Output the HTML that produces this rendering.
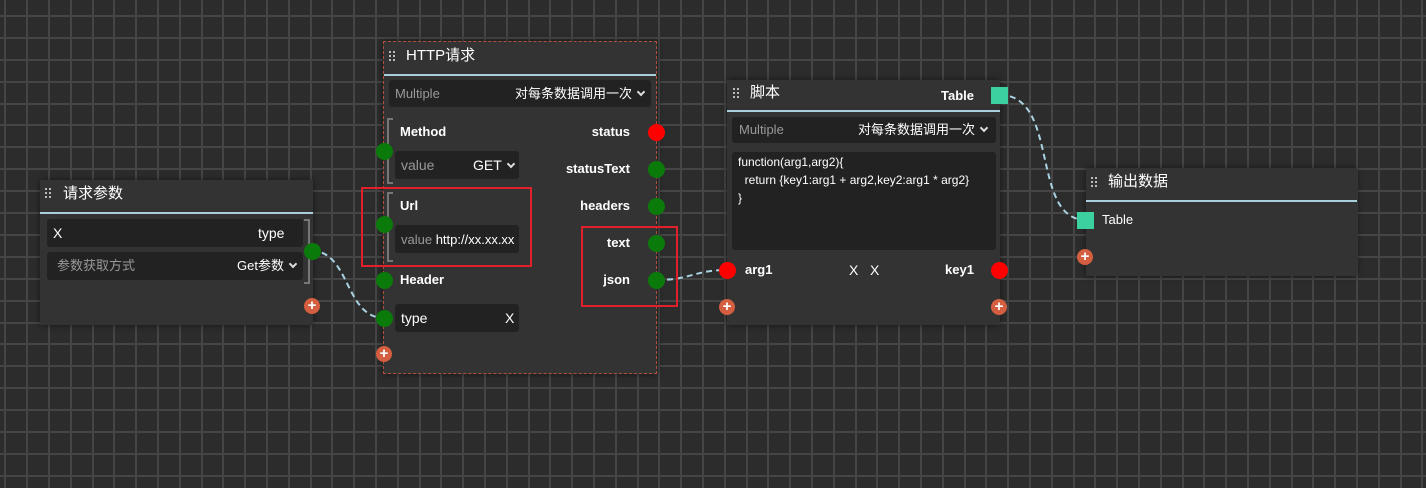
<!DOCTYPE html>
<html><head><meta charset="utf-8"><style>
*{margin:0;padding:0;box-sizing:border-box}
body{width:1426px;height:488px;overflow:hidden;position:relative;font-family:"Liberation Sans","Noto Sans CJK SC",sans-serif;font-size:13px;color:#fff;background-color:#2c2c2c}
.a{position:absolute}
.node{position:absolute;background:#333;box-shadow:0 0 6px rgba(0,0,0,.5)}
.sep{position:absolute;height:2px;background:#a9cfdd}
.title{position:absolute;font-size:15px;line-height:18px;color:#fff;white-space:nowrap}
.grip{position:absolute;width:6px;height:10px;background-image:radial-gradient(circle,#ddd 0.9px,transparent 1.1px);background-size:4px 4px;background-position:-1px -1px}
.box{position:absolute;background:#222;border-radius:3px}
.t{position:absolute;line-height:16px;white-space:nowrap}
.g{color:#999}
.b{font-weight:bold}
.dot{position:absolute;width:17px;height:17px;border-radius:50%;background:#0a7a0a}
.red{background:#f00}
.plus{position:absolute;width:16px;height:16px;border-radius:50%;background:#d45f40;color:#fff;font-size:15px;line-height:15px;text-align:center;font-weight:bold}
.sq{position:absolute;width:17px;height:17px;background:#3ccf9f}
.rr{position:absolute;border:2px solid #e0202a}
.chev{display:inline-block;width:6px;height:6px;border-right:2px solid #ddd;border-bottom:2px solid #ddd;transform:rotate(45deg);margin-left:6px;position:relative;top:-3px}
.brk{position:absolute;border:2px solid #777;border-right:none;width:6px}
.brkr{position:absolute;border:2px solid #777;border-left:none;width:6px}
#w{position:absolute;left:0;top:0;width:1426px;height:488px;z-index:2}
</style></head><body>

<svg class="a" style="left:0;top:0" width="1426" height="488">
<path stroke="#454545" stroke-width="2" shape-rendering="crispEdges" fill="none" d="
M5 0V488M27 0V488M49 0V488M71 0V488M93 0V488M114 0V488M136 0V488M158 0V488M180 0V488M202 0V488M223 0V488M245 0V488M267 0V488M289 0V488M311 0V488M332 0V488M354 0V488M376 0V488M398 0V488M420 0V488M441 0V488M463 0V488M485 0V488M507 0V488M529 0V488M550 0V488M572 0V488M594 0V488M616 0V488M638 0V488M659 0V488M681 0V488M703 0V488M725 0V488M747 0V488M768 0V488M790 0V488M812 0V488M834 0V488M856 0V488M877 0V488M899 0V488M921 0V488M943 0V488M965 0V488M986 0V488M1008 0V488M1030 0V488M1052 0V488M1074 0V488M1095 0V488M1117 0V488M1139 0V488M1161 0V488M1183 0V488M1204 0V488M1226 0V488M1248 0V488M1270 0V488M1292 0V488M1313 0V488M1335 0V488M1357 0V488M1379 0V488M1401 0V488M1422 0V488
M0 16H1426M0 38H1426M0 60H1426M0 82H1426M0 104H1426M0 125H1426M0 147H1426M0 169H1426M0 191H1426M0 213H1426M0 235H1426M0 257H1426M0 279H1426M0 301H1426M0 323H1426M0 344H1426M0 366H1426M0 388H1426M0 410H1426M0 432H1426M0 454H1426M0 476H1426"/>
</svg>

<svg class="a" style="left:0;top:0;z-index:1" width="1426" height="488">
<g fill="none" stroke="#a9d2e2" stroke-width="2" stroke-dasharray="6,4">
<path d="M312 251 C350 251 345 318 384 318"/>
<path d="M657 280 C690 280 695 270 727 270"/>
<path d="M1000 95 C1060 95 1030 220 1086 220"/>
</g></svg>

<div id="w">
<!-- Node 1 -->
<div class="node" style="left:40px;top:180px;width:273px;height:145px"></div>
<div class="grip" style="left:45px;top:188px"></div>
<div class="title" style="left:63px;top:185px">请求参数</div>
<div class="sep" style="left:40px;top:212px;width:273px"></div>
<div class="box" style="left:47px;top:219px;width:256px;height:28px"></div>
<div class="t" style="left:53px;top:225px;font-size:14px">X</div>
<div class="t" style="left:258px;top:225px;font-size:14px">type</div>
<div class="box" style="left:47px;top:252px;width:256px;height:28px"></div>
<div class="t g" style="left:57px;top:258px">参数获取方式</div>
<div class="t" style="left:237px;top:258px">Get参数<span class="chev"></span></div>
<div class="brkr" style="left:304px;top:219px;height:65px"></div>
<div class="plus" style="left:304px;top:298px">+</div>

<!-- Node 2 -->
<div class="node" style="left:383px;top:41px;width:274px;height:333px;border:1.5px dashed #b0503c"></div>
<div class="grip" style="left:389px;top:51px"></div>
<div class="title" style="left:406px;top:47px">HTTP请求</div>
<div class="sep" style="left:384px;top:74px;width:272px"></div>
<div class="box" style="left:389px;top:80px;width:262px;height:27px"></div>
<div class="t g" style="left:395px;top:86px">Multiple</div>
<div class="t" style="left:515px;top:86px">对每条数据调用一次<span class="chev"></span></div>
<div class="brk" style="left:387px;top:118px;height:66px"></div>
<div class="t b" style="left:400px;top:124px">Method</div>
<div class="box" style="left:395px;top:151px;width:124px;height:28px"></div>
<div class="t g" style="left:401px;top:157px;font-size:14px">value</div>
<div class="t" style="left:473px;top:157px;font-size:14px">GET<span class="chev"></span></div>
<div class="brk" style="left:387px;top:192px;height:70px"></div>
<div class="t b" style="left:400px;top:198px">Url</div>
<div class="box" style="left:395px;top:225px;width:124px;height:28px"></div>
<div class="t" style="left:401px;top:232px"><span class="g">value</span> http://xx.xx.xx</div>
<div class="t b" style="left:400px;top:272px">Header</div>
<div class="box" style="left:395px;top:304px;width:124px;height:28px"></div>
<div class="t" style="left:401px;top:310px;font-size:14px">type</div>
<div class="t" style="left:505px;top:310px;font-size:14px">X</div>
<div class="dot" style="left:376px;top:143px"></div>
<div class="dot" style="left:376px;top:216px"></div>
<div class="dot" style="left:376px;top:272px"></div>
<div class="dot" style="left:376px;top:310px"></div>
<div class="plus" style="left:376px;top:346px">+</div>
<div class="t b" style="right:796px;top:124px">status</div>
<div class="t b" style="right:796px;top:161px">statusText</div>
<div class="t b" style="right:796px;top:198px">headers</div>
<div class="t b" style="right:796px;top:235px">text</div>
<div class="t b" style="right:796px;top:272px">json</div>
<div class="dot red" style="left:648px;top:124px"></div>
<div class="dot" style="left:648px;top:161px"></div>
<div class="dot" style="left:648px;top:198px"></div>
<div class="dot" style="left:648px;top:235px"></div>
<div class="dot" style="left:648px;top:272px"></div>
<div class="rr" style="left:361px;top:187px;width:171px;height:80px"></div>
<div class="rr" style="left:581px;top:226px;width:97px;height:81px"></div>
<div class="dot" style="left:304px;top:243px"></div>

<!-- Node 3 -->
<div class="node" style="left:727px;top:80px;width:273px;height:245px"></div>
<div class="grip" style="left:733px;top:88px"></div>
<div class="title" style="left:750px;top:84px">脚本</div>
<div class="t b" style="left:941px;top:88px">Table</div>
<div class="sq" style="left:991px;top:87px"></div>
<div class="sep" style="left:727px;top:110px;width:273px"></div>
<div class="box" style="left:732px;top:117px;width:264px;height:26px"></div>
<div class="t g" style="left:739px;top:122px">Multiple</div>
<div class="t" style="left:858px;top:122px">对每条数据调用一次<span class="chev"></span></div>
<div class="box" style="left:732px;top:152px;width:264px;height:98px"></div>
<div class="t" style="left:738px;top:153px;font-size:12px;line-height:18px">function(arg1,arg2){<br>&nbsp;&nbsp;return {key1:arg1 + arg2,key2:arg1 * arg2}<br>}</div>
<div class="dot red" style="left:719px;top:262px"></div>
<div class="t b" style="left:745px;top:262px">arg1</div>
<div class="t" style="left:849px;top:262px;font-size:14px">X&nbsp;&nbsp;&nbsp;X</div>
<div class="t b" style="left:945px;top:262px">key1</div>
<div class="dot red" style="left:991px;top:262px"></div>
<div class="plus" style="left:719px;top:299px">+</div>
<div class="plus" style="left:991px;top:299px">+</div>

<!-- Node 4 -->
<div class="node" style="left:1086px;top:168px;width:271px;height:108px"></div>
<div class="grip" style="left:1091px;top:177px"></div>
<div class="title" style="left:1108px;top:173px">输出数据</div>
<div class="sep" style="left:1086px;top:200px;width:271px"></div>
<div class="sq" style="left:1077px;top:212px"></div>
<div class="t" style="left:1102px;top:212px;font-size:13px">Table</div>
<div class="plus" style="left:1077px;top:249px">+</div>
</div>
</body></html>
